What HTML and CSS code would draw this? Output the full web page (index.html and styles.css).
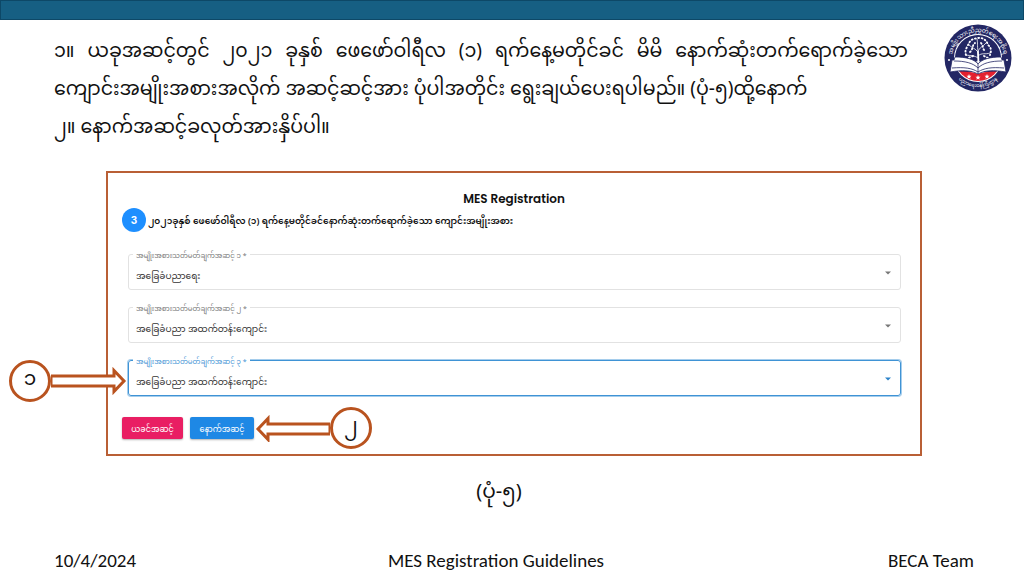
FILE: index.html
```html
<!DOCTYPE html>
<html lang="my">
<head>
<meta charset="UTF-8" />
<meta name="viewport" content="width=device-width, initial-scale=1" />
<title>MES Registration Guidelines</title>
<link rel="stylesheet" href="styles.css">
</head>
<body>
  <div class="topbar"></div>

  <header class="intro">
    <div class="steps">
      <p class="spread">၁။ ယခုအဆင့်တွင် ၂၀၂၁ ခုနှစ် ဖေဖော်ဝါရီလ (၁) ရက်နေ့မတိုင်ခင် မိမိ နောက်ဆုံးတက်ရောက်ခဲ့သော</p>
      <p>ကျောင်းအမျိုးအစားအလိုက် အဆင့်ဆင့်အား ပုံပါအတိုင်း ရွေးချယ်ပေးရပါမည်။ (ပုံ-၅)ထို့နောက်</p>
      <p>၂။ နောက်အဆင့်ခလုတ်အားနှိပ်ပါ။</p>
    </div>
    <svg class="logo" viewBox="0 0 68 68" role="img" aria-label="BECA">
      <defs>
        <path id="arcTop" d="M8 34 A26 26 0 0 1 60 34" />
        <path id="arcBottom" d="M5 34 A29 29 0 0 0 63 34" />
        <clipPath id="inner"><circle cx="34" cy="34" r="23" /></clipPath>
      </defs>
      <circle cx="34" cy="34" r="33.5" fill="#232764" />
      <circle cx="34" cy="34" r="24" fill="#fff" />
      <g clip-path="url(#inner)">
        <rect x="10" y="10" width="48" height="38" fill="#232764" />
        <path d="M10 48 C22 47 30 48 34 50 C38 48 46 47 58 48 V60 H10 Z" fill="#e3202f" />
      </g>
      <!-- tree -->
      <g fill="none" stroke="#fff" stroke-linecap="round">
        <path stroke-width="1.8" d="M34 40 C35 36 34 34 34 28" />
        <path stroke-width="0.8" d="M34 34 C30 31 27 32 22 31 M34 32 C38 28 41 31 46 29 M34 28 C31 24 28 24 25 21 M34 28 C35 23 39 23 42 19 M34 27 C33 21 34 19 33 15 M29 40 L34 37 L40 40" />
        <path stroke-width="1.9" stroke-dasharray="0.8 2.6" d="M22 31 C20 26 24 22 25 19 C28 14 31 15 34 14 C39 13 43 17 44 21 C48 24 47 28 46 31 M26 28 C29 26 28 21 31 19 M37 19 C40 23 38 26 42 27 M29 32 L24 34 M40 32 L44 34" />
      </g>
      <!-- open book -->
      <path fill="#fff" stroke="#232764" stroke-width="0.8" d="M11 33 C22 33 30 35 34 40 C38 35 46 33 57 33 L58 36 L60 36 L62 48 C50 46 41 46 34 50 C27 46 18 46 6 48 L8 36 L10 36 Z" />
      <path fill="none" stroke="#232764" stroke-width="0.8" d="M10 37 C21 37 29 39 34 44 C39 39 47 37 58 37 M8 44 C20 43 28 44 34 48 C40 44 48 43 60 44 M34 40 L34 50" />
      <g fill="#fff">
        <path id="star" d="M25 50 L25.700 51.800 L27.500 51.800 L26.100 52.900 L26.600 54.700 L25 53.700 L23.400 54.700 L23.900 52.900 L22.500 51.800 L24.300 51.800 Z" />
        <use href="#star" x="9" y="1" />
        <use href="#star" x="18" />
        <circle cx="5" cy="36" r="1" />
        <circle cx="63" cy="36" r="1" />
      </g>
      <text class="logo-text"><textPath href="#arcTop" startOffset="50%">အမျိုးသားညီညွတ်ရေးအစိုးရ</textPath></text>
      <text class="logo-text small"><textPath href="#arcBottom" startOffset="50%">ပညာရေးဝန်ကြီးဌာန</textPath></text>
    </svg>
  </header>

  <main class="figure">
    <form class="panel">
      <h1>MES Registration</h1>
      <div class="step">
        <span class="step-no">3</span>
        <h2>၂၀၂၁ခုနှစ် ဖေဖော်ဝါရီလ (၁) ရက်နေ့မတိုင်ခင်နောက်ဆုံးတက်ရောက်ခဲ့သော ကျောင်းအမျိုးအစား</h2>
      </div>

      <div class="fields">
        <div class="field">
          <label for="level1">အမျိုးအစားသတ်မတ်ချက်အဆင့် ၁ *</label>
          <select id="level1"><option>အခြေခံပညာရေး</option></select>
          <svg class="caret" viewBox="0 0 6 4"><path d="M0 0.500 H6 L3 3.500 Z" /></svg>
        </div>
        <div class="field">
          <label for="level2">အမျိုးအစားသတ်မတ်ချက်အဆင့် ၂ *</label>
          <select id="level2"><option>အခြေခံပညာ အထက်တန်းကျောင်း</option></select>
          <svg class="caret" viewBox="0 0 6 4"><path d="M0 0.500 H6 L3 3.500 Z" /></svg>
        </div>
        <div class="field active">
          <label for="level3">အမျိုးအစားသတ်မတ်ချက်အဆင့် ၃ *</label>
          <select id="level3"><option>အခြေခံပညာ အထက်တန်းကျောင်း</option></select>
          <svg class="caret" viewBox="0 0 6 4"><path d="M0 0.500 H6 L3 3.500 Z" /></svg>
          <div class="callout callout-one">
            <span class="bubble">၁</span>
            <svg class="arrow" viewBox="0 0 76 28"><path d="M0 9 H63 V3.500 L73 14 L63 24.500 V19 H0 Z" /></svg>
          </div>
        </div>
      </div>

      <div class="actions">
        <button type="button" class="prev">ယခင်အဆင့်</button>
        <button type="button" class="next">နောက်အဆင့်</button>
        <div class="callout">
          <svg class="arrow" viewBox="0 0 76 28"><path d="M76 10 H14 V4.500 L4 15 L14 25.500 V20 H76 Z" /></svg>
          <span class="bubble">၂</span>
        </div>
      </div>
    </form>
    <p class="caption">(ပုံ-၅)</p>
  </main>

  <footer class="footer">
    <span>10/4/2024</span>
    <span class="doc-title">MES Registration Guidelines</span>
    <span class="team">BECA Team</span>
  </footer>
</body>
</html>
```
FILE: styles.css
```css
* {
  box-sizing: border-box;
}
body {
  margin: 0; min-height: 100vh;
  display: flex; flex-direction: column;
  background: #fff; color: #111;
  font-family: "Pyidaungsu", "Noto Sans Myanmar", "Noto Sans", sans-serif;
}
h1, h2, p {
  margin: 0;
}
.topbar {
  height: 20px; background: #165f83; border: 1px solid #0d4867;
}

/* instructions + logo */
.intro {
  display: flex; justify-content: space-between; align-items: flex-start;
  padding: 4px 12px 0 54px; gap: 36px;
}
.steps {
  flex: 1; padding-top: 10px;
  font-size: 19px; line-height: 38px; white-space: nowrap;
}
.spread {
  text-align-last: justify;
}
.logo {
  width: 68px; height: 68px; flex: none;
}
.logo-text {
  font-size: 6px; fill: #fff; text-anchor: middle;
}
.logo-text.small {
  font-size: 5px;
}

/* form panel */
.figure {
  padding: 23px 102px 0 106px;
}
.panel {
  border: 2px solid #b95f35; padding: 17px 19px 5px 14px;
}
.panel h1 {
  padding-left: 5px;
  font-family: "Poppins", Inter, sans-serif;
  font-size: 12px; line-height: 17px; font-weight: 600; text-align: center;
}
.step {
  display: flex; align-items: center; gap: 2px;
  padding-top: 1px;
}
.step-no {
  width: 24px; height: 24px; border-radius: 50%;
  background: #1e8fff; color: #fff;
  font: 700 10px/24px Inter, sans-serif; text-align: center;
}
.step h2 {
  padding-top: 3px;
  font-size: 9px; line-height: 20px; font-weight: 600; white-space: nowrap;
}
.fields {
  display: flex; flex-direction: column; gap: 17px;
  padding: 22px 0 0 6px;
}
.field {
  position: relative; height: 36px;
  border: 1px solid #e2e2e2; border-radius: 3px;
}
.field label {
  position: absolute; left: 4px; top: -5px; padding: 0 3px;
  background: #fff; color: #777;
  font-size: 7px; line-height: 14px; white-space: nowrap;
}
.field select {
  width: 100%; height: 100%; padding: 9px 24px 0 7px;
  appearance: none; border: none; outline: none; background: none;
  color: #333; font-family: inherit; font-size: 9px;
}
.caret {
  position: absolute; right: 9px; top: 16px;
  width: 6px; height: 4px; fill: #777;
}
.field.active {
  border-color: #3f93d5; box-shadow: 0 0 0 1px #a5cdec;
}
.field.active label {
  color: #3f93d5;
}
.field.active .caret {
  fill: #2b82c9;
}
.actions {
  display: flex; align-items: center; height: 42px; margin-top: 11px;
}
.actions button {
  height: 22px; padding: 3px 6px 0; border: none; border-radius: 2px;
  color: #fff; font-family: inherit; font-size: 8px; line-height: 18px;
  box-shadow: 0 1px 2px rgba(0,0,0,0.3); cursor: pointer;
}
.actions .prev {
  width: 61px; margin-right: 7px; background: #e91e63;
}
.actions .next {
  width: 64px; background: #1e88e5;
}

/* numbered pointers */
.callout {
  display: flex; align-items: center;
}
.callout-one {
  position: absolute; right: 100%; top: -1px; margin-right: 2px;
}
.bubble {
  width: 42px; height: 42px; border: 3px solid #b9531f; border-radius: 50%;
  background: #fff; font-size: 20px; line-height: 36px; text-align: center;
}
.arrow {
  width: 76px; height: 28px; fill: #fff; stroke: #b9531f; stroke-width: 3;
}
.caption {
  padding: 19px 38px 0 8px; font-size: 20px; line-height: 38px; text-align: center;
}

.footer {
  display: grid; grid-template-columns: 1fr auto 1fr;
  margin-top: auto; padding: 0 50px 3px 54px;
  font-family: "Carlito", Lato, sans-serif; font-size: 19px; line-height: 24px;
}
.doc-title {
  padding-right: 36px;
}
.team {
  text-align: right;
}
```
